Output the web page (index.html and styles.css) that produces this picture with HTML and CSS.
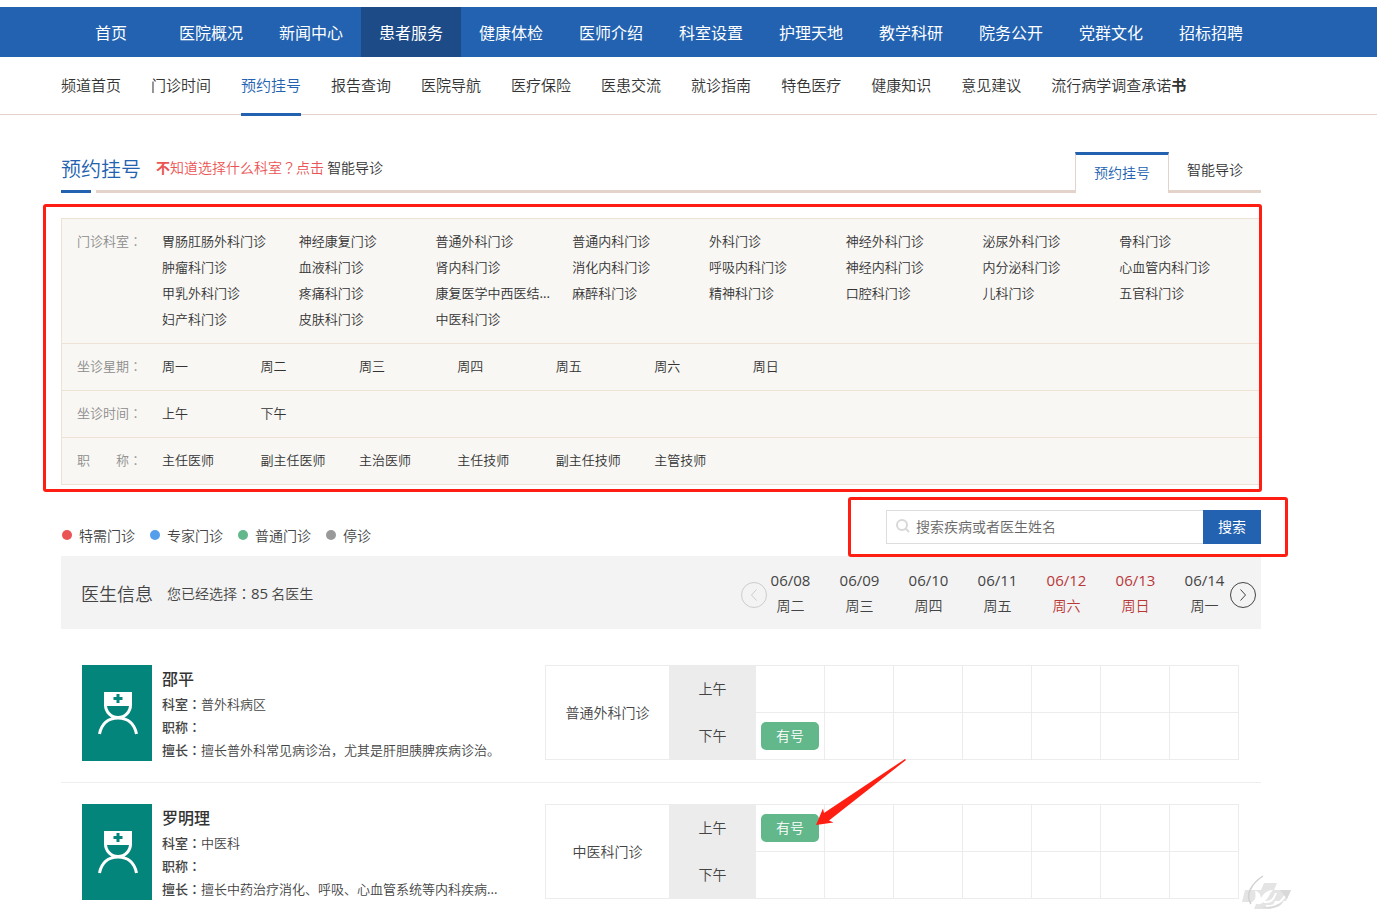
FILE: index.html
```html
<!DOCTYPE html>
<html lang="zh-CN">
<head>
<meta charset="utf-8">
<title>预约挂号</title>
<link rel="stylesheet" href="styles.css">
</head>
<body>
<nav class="main-nav">
  <div class="wrap main-links">
    <a href="#">首页</a><a href="#">医院概况</a><a href="#">新闻中心</a><a href="#" class="active">患者服务</a><a href="#">健康体检</a><a href="#">医师介绍</a><a href="#">科室设置</a><a href="#">护理天地</a><a href="#">教学科研</a><a href="#">院务公开</a><a href="#">党群文化</a><a href="#">招标招聘</a>
  </div>
</nav>
<nav class="sub-nav">
  <div class="wrap sub-links">
    <a href="#">频道首页</a><a href="#">门诊时间</a><a href="#" class="active">预约挂号</a><a href="#">报告查询</a><a href="#">医院导航</a><a href="#">医疗保险</a><a href="#">医患交流</a><a href="#">就诊指南</a><a href="#">特色医疗</a><a href="#">健康知识</a><a href="#">意见建议</a><a href="#">流行病学调查承诺<b>书</b></a>
  </div>
</nav>
<main class="wrap">
  <header class="page-head">
    <h1 class="page-title">预约挂号</h1>
    <p class="tip"><b>不</b>知道选择什么科室<span class="mid" lang="zh-TW">？</span>点击 <a href="#">智能导诊</a></p>
    <a href="#" class="tab current">预约挂号</a>
    <a href="#" class="tab">智能导诊</a>
  </header>

  <section class="filters">
    <div class="filter-row">
      <span class="label">门诊科室<span class="mid" lang="zh-TW">：</span></span>
      <div class="options departments">
        <a href="#">胃肠肛肠外科门诊</a><a href="#">神经康复门诊</a><a href="#">普通外科门诊</a><a href="#">普通内科门诊</a><a href="#">外科门诊</a><a href="#">神经外科门诊</a><a href="#">泌尿外科门诊</a><a href="#">骨科门诊</a>
        <a href="#">肿瘤科门诊</a><a href="#">血液科门诊</a><a href="#">肾内科门诊</a><a href="#">消化内科门诊</a><a href="#">呼吸内科门诊</a><a href="#">神经内科门诊</a><a href="#">内分泌科门诊</a><a href="#">心血管内科门诊</a>
        <a href="#">甲乳外科门诊</a><a href="#">疼痛科门诊</a><a href="#">康复医学中西医结...</a><a href="#">麻醉科门诊</a><a href="#">精神科门诊</a><a href="#">口腔科门诊</a><a href="#">儿科门诊</a><a href="#">五官科门诊</a>
        <a href="#">妇产科门诊</a><a href="#">皮肤科门诊</a><a href="#">中医科门诊</a>
      </div>
    </div>
    <div class="filter-row">
      <span class="label">坐诊星期<span class="mid" lang="zh-TW">：</span></span>
      <div class="options short"><a href="#">周一</a><a href="#">周二</a><a href="#">周三</a><a href="#">周四</a><a href="#">周五</a><a href="#">周六</a><a href="#">周日</a></div>
    </div>
    <div class="filter-row">
      <span class="label">坐诊时间<span class="mid" lang="zh-TW">：</span></span>
      <div class="options short"><a href="#">上午</a><a href="#">下午</a></div>
    </div>
    <div class="filter-row">
      <span class="label">职&emsp;&emsp;称<span class="mid" lang="zh-TW">：</span></span>
      <div class="options short"><a href="#">主任医师</a><a href="#">副主任医师</a><a href="#">主治医师</a><a href="#">主任技师</a><a href="#">副主任技师</a><a href="#">主管技师</a></div>
    </div>
    <div class="mark mark-filters"></div>
  </section>

  <div class="toolbar">
    <ul class="legend">
      <li class="special">特需门诊</li><li class="expert">专家门诊</li><li class="general">普通门诊</li><li class="closed">停诊</li>
    </ul>
    <form class="search">
      <svg class="search-icon" viewBox="0 0 14 14"><circle cx="6" cy="6" r="5"/><path d="M9.8 9.8L13 13"/></svg>
      <input type="text" aria-label="搜索疾病或者医生姓名" placeholder="搜索疾病或者医生姓名">
      <button type="button">搜索</button>
      <div class="mark mark-search"></div>
    </form>
  </div>

  <section class="info-bar">
    <h2>医生信息</h2>
    <p>您已经选择<span class="mid" lang="zh-TW">：</span><span class="num">85</span> 名医生</p>
    <div class="dates">
      <button type="button" class="arrow prev" aria-label="前一周"><svg viewBox="0 0 26 26"><circle cx="13" cy="13" r="12.5"/><path d="M15.5 7.5L10.5 13l5 5.5"/></svg></button>
      <div><span class="day">06/08</span>周二</div><div><span class="day">06/09</span>周三</div><div><span class="day">06/10</span>周四</div><div><span class="day">06/11</span>周五</div><div class="weekend"><span class="day">06/12</span>周六</div><div class="weekend"><span class="day">06/13</span>周日</div><div><span class="day">06/14</span>周一</div>
      <button type="button" class="arrow next" aria-label="后一周"><svg viewBox="0 0 26 26"><circle cx="13" cy="13" r="12.5"/><path d="M10.5 7.5l5 5.5-5 5.5"/></svg></button>
    </div>
  </section>

  <section class="doctors">
    <article class="doctor">
      <svg class="photo" viewBox="0 0 70 96"><path class="cap" d="M22 27h28v14H22z"/><path class="line" d="M23.500 40a12.500 12.500 0 0 0 25 0M17.500 69C19.500 59 26 53 36 53S52.500 59 54.500 69"/><path class="cross" d="M31.500 33.500h9M36 29v9"/></svg>
      <div class="details">
        <h3>邵平</h3>
        <p><b>科室<span class="mid" lang="zh-TW">：</span></b>普外科病区</p>
        <p><b>职称<span class="mid" lang="zh-TW">：</span></b></p>
        <p><b>擅长<span class="mid" lang="zh-TW">：</span></b>擅长普外科常见病诊治，尤其是肝胆胰脾疾病诊治。</p>
      </div>
      <table class="schedule">
        <tr><th class="dept" rowspan="2">普通外科门诊</th><th class="half">上午</th><td></td><td></td><td></td><td></td><td></td><td></td><td></td></tr>
        <tr><th class="half">下午</th><td><button type="button" class="available">有号</button></td><td></td><td></td><td></td><td></td><td></td><td></td></tr>
      </table>
    </article>
    <article class="doctor">
      <svg class="photo" viewBox="0 0 70 96"><path class="cap" d="M22 27h28v14H22z"/><path class="line" d="M23.500 40a12.500 12.500 0 0 0 25 0M17.500 69C19.500 59 26 53 36 53S52.500 59 54.500 69"/><path class="cross" d="M31.500 33.500h9M36 29v9"/></svg>
      <div class="details">
        <h3>罗明理</h3>
        <p><b>科室<span class="mid" lang="zh-TW">：</span></b>中医科</p>
        <p><b>职称<span class="mid" lang="zh-TW">：</span></b></p>
        <p><b>擅长<span class="mid" lang="zh-TW">：</span></b>擅长中药治疗消化、呼吸、心血管系统等内科疾病...</p>
      </div>
      <table class="schedule">
        <tr><th class="dept" rowspan="2">中医科门诊</th><th class="half">上午</th><td><button type="button" class="available">有号<svg class="pointer" viewBox="0 0 90 68"><path d="M0 66L7 49.500 8 54 89 0 90 1 13 61.500 17.500 63.500z"/></svg></button></td><td></td><td></td><td></td><td></td><td></td><td></td></tr>
        <tr><th class="half">下午</th><td></td><td></td><td></td><td></td><td></td><td></td><td></td></tr>
      </table>
      <svg class="watermark" viewBox="0 0 50 35">
        <path fill="#dedede" d="M3 15h16l3-7h13l-3 7h17l-5 11H33l-4 8H12l3-7H0z"/>
        <path fill="#fff" d="M13 16c3 0 5 2 6 7 3-5 7-8 12-8-4 4-4 8-8 11-4 4-8 4-13 1 4-2 4-7 3-11z"/>
        <path fill="none" stroke="#c6c6c6" stroke-width="1.500" d="M21 1C9 9 3 20 9 29"/>
        <path fill="none" stroke="#fff" stroke-width="2" d="M22 27c8 1 10-4 12-9M24 31c10 1 16-4 20-12"/>
        <path fill="#d0d0d0" d="M17 31c9 3 20-1 25-6-3 8-14 11-25 6zM38 15h11l-4 9z"/>
      </svg>
    </article>
  </section>
</main>
</body>
</html>
```

FILE: styles.css
```css
* { box-sizing: border-box; margin: 0; padding: 0; }
body {
  padding-top: 7px;
  background: #fff;
  color: #333;
  font: 350 14px/26px "Noto Sans CJK SC", sans-serif;
}
a { color: inherit; text-decoration: none; }
button, input { font: inherit; border: 0; }
button { cursor: pointer; }
ul { list-style: none; }
.mid { font-family: "Noto Sans CJK TC", sans-serif; }
.wrap { max-width: 1200px; margin-left: 61px; }

.main-nav { background: #2262b0; color: #fff; font-size: 16px; font-weight: 400; }
.main-links { display: flex; }
.main-links a { flex: 1; line-height: 50px; text-align: center; }
.main-links .active { background: #1c4b87; }

.sub-nav { border-bottom: 1px solid #e3d3cb; font-size: 15px; }
.sub-links { display: flex; gap: 30px; height: 57px; white-space: nowrap; }
.sub-links a { line-height: 55px; }
.sub-links .active { color: #2262b0; border-bottom: 3px solid #2262b0; height: 59px; }

.page-head { display: flex; margin-top: 37px; height: 41px; background: linear-gradient(#e3d3cb, #e3d3cb) 35px 100% / 100% 3px no-repeat; }
.page-title { position: relative; color: #2262b0; font-size: 20px; font-weight: inherit; line-height: 34px; margin-right: 15px; }
.page-title::after { content: ""; position: absolute; left: 0; bottom: 0; width: 30px; height: 3px; background: #2262b0; }
.tip { color: #eb5454; flex: 1; line-height: 30px; }
.tip a { color: #333; }
.tab { padding: 0 18px; line-height: 34px; }
.tab.current { background: #fff; color: #2262b0; border: 1px solid #e3d3cb; border-top: 3px solid #2262b0; border-bottom: 0; }

.filters { position: relative; margin-top: 25px; background: #f8f7f3; border: 1px solid #ede2d4; border-bottom: 0; font-size: 13px; }
.filter-row { display: flex; padding: 9px 4px 11px 15px; border-bottom: 1px solid #ede2d4; }
.label { flex: 0 0 85px; color: #8c8c8c; line-height: 26px; }
.options { flex: 1; display: grid; white-space: nowrap; }
.departments { grid-template-columns: repeat(8, 1fr); }
.short { grid-template-columns: repeat(11, 9%); }
.mark { position: absolute; border: 3px solid #ff1e12; border-radius: 3px; pointer-events: none; }
.mark-filters { inset: -15px -2px -7px -19px; }
.mark-search { inset: -13px -27px -13px -38px; z-index: 2; }

.toolbar { display: flex; justify-content: space-between; margin-top: 25px; padding-bottom: 8px; }
.legend { display: flex; gap: 14px; padding-top: 12px; }
.legend li { display: flex; align-items: center; gap: 7px; padding-left: 1px; color: #444; }
.legend li::before { content: ""; width: 10px; height: 10px; border-radius: 50%; background: #999; }
.legend .special::before { background: #eb5454; }
.legend .expert::before { background: #549eeb; }
.legend .general::before { background: #62b78b; }
.search { position: relative; display: flex; width: 375px; height: 34px; }
.search input { flex: 1; min-width: 0; padding: 0 0 2px 29px; border: 1px solid #ddd; border-right: 0; }
.search input::placeholder { color: #666; opacity: 1; }
.search button { width: 58px; padding-bottom: 2px; background: #2262b0; color: #fff; font-weight: 400; }
.search-icon { position: absolute; left: 10px; top: 9px; width: 14px; height: 14px; fill: none; stroke: #d8d8d8; stroke-width: 2; }

.info-bar { display: flex; align-items: center; height: 73px; padding: 0 22px 0 20px; background: #f3f3f3; color: #444; }
.info-bar h2 { font-size: 18px; font-weight: inherit; margin-right: 14px; }
.info-bar p { flex: 1; }
.num, .day { font-family: "Open Sans", sans-serif; font-size: 15px; font-weight: 400; }
.day { display: block; }
.dates { position: relative; display: flex; text-align: center; line-height: 25px; }
.dates div { width: 69px; }
.dates .weekend { color: #b83838; }
.arrow { position: absolute; top: 14px; width: 26px; height: 26px; background: none; color: #444; }
.arrow svg { display: block; fill: none; stroke: currentColor; }
.arrow.prev { left: -15px; color: #ccc; }
.arrow.next { right: -17px; }

.doctors { padding: 15px 0 10px; }
.doctor { position: relative; display: flex; align-items: flex-start; padding: 21px 22px 21px 21px; border-bottom: 1px solid #eee; }
.doctor:last-child { padding-bottom: 0; border: 0; }
.photo { width: 70px; height: 96px; margin-right: 10px; background: #04857b; flex: none; }
.cap { fill: #fff; }
.line { fill: none; stroke: #fff; stroke-width: 3; }
.cross { fill: none; stroke: #04857b; stroke-width: 3; }
.details { flex: 1; min-width: 0; font-size: 13px; line-height: 23px; color: #444; white-space: nowrap; }
.details h3 { font-size: 16px; font-weight: 500; line-height: 26px; margin-bottom: 1px; color: #333; }
.details b { font-weight: 500; color: #444; }
.schedule { width: 694px; height: 95px; border-collapse: collapse; table-layout: fixed; text-align: center; color: #444; }
.schedule th { font-weight: inherit; padding-bottom: 2px; }
.schedule td, .schedule th { height: 47px; border: 1px solid #ececec; }
.schedule .dept { width: 124px; }
.schedule .half { width: 86px; background: #ececec; }
.available { position: relative; display: block; width: 58px; height: 28px; margin: 0 auto; padding-bottom: 2px; border-radius: 5px; background: #62b78b; color: #fff; }
.pointer { position: absolute; left: 55px; top: -55px; width: 90px; height: 68px; fill: #ff1e12; z-index: 2; }
.watermark { position: absolute; right: -31px; bottom: -10px; width: 50px; height: 35px; opacity: .8; }
```
